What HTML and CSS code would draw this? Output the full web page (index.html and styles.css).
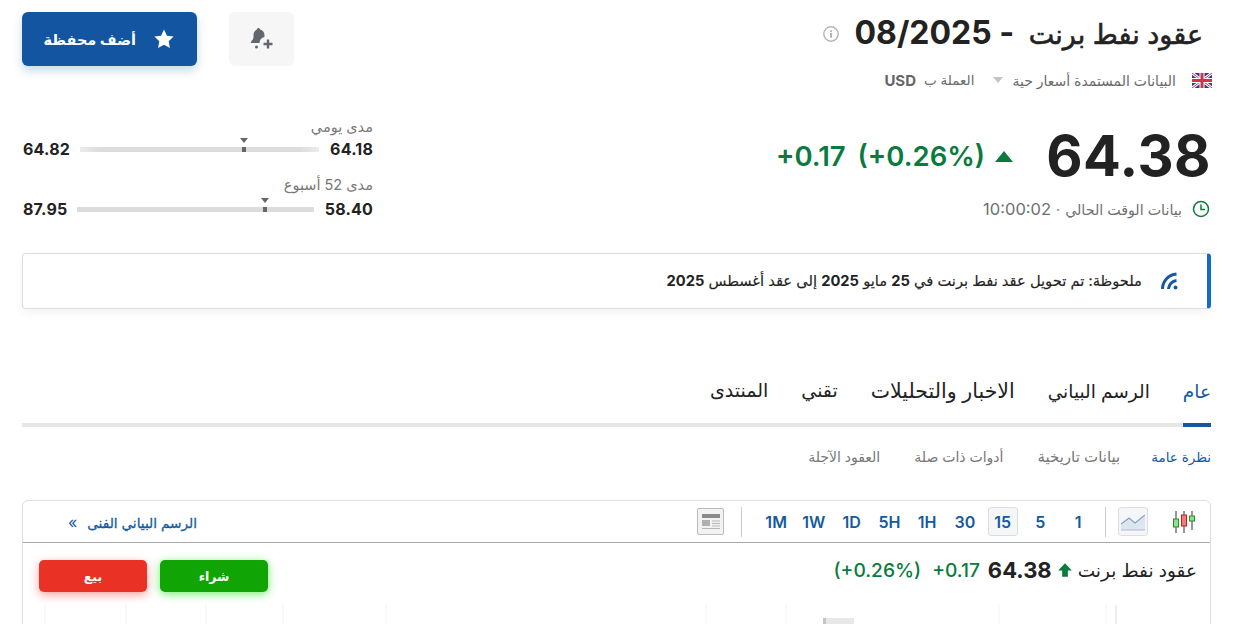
FILE: index.html
```html
<!DOCTYPE html>
<html lang="ar" dir="rtl">
<head>
    <meta charset="UTF-8">
    <meta name="viewport" content="width=device-width, initial-scale=1.0">
    <title>عقود نفط برنت - 08/2025</title>
    <link rel="stylesheet" href="styles.css">
</head>
<body>

<div class="page">
    <header class="top">
        <div class="instrument">
            <div class="title-row">
                <h1><span class="title-name">عقود نفط برنت</span> - 08/2025</h1>
                <svg class="info-icon" viewBox="0 0 16 16" width="16" height="16">
                    <circle cx="8" cy="8" r="7.2" fill="none" stroke="#b5b5b5" stroke-width="1.4"/>
                    <rect x="7.2" y="7" width="1.6" height="4.6" fill="#a0a0a0"/>
                    <rect x="7.2" y="4.2" width="1.6" height="1.6" fill="#a0a0a0"/>
                </svg>
            </div>
            <div class="meta-row">
                <svg class="flag" viewBox="0 0 20 15" width="20" height="15">
                    <rect width="20" height="15" fill="#2b3f8c"/>
                    <path d="M0 0L20 15M20 0L0 15" stroke="#fff" stroke-width="3"/>
                    <path d="M0 0L20 15M20 0L0 15" stroke="#d2334a" stroke-width="1"/>
                    <path d="M10 0V15M0 7.5H20" stroke="#fff" stroke-width="5"/>
                    <path d="M10 0V15M0 7.5H20" stroke="#d2334a" stroke-width="3"/>
                </svg>
                <span class="meta-text">البيانات المستمدة أسعار حية</span>
                <span class="caret"></span>
                <span class="meta-text meta-currency">العملة ب</span>
                <b class="currency">USD</b>
            </div>
        </div>
        <div class="actions">
            <button class="alert-btn" type="button">
                <svg viewBox="0 0 24 24" width="24" height="24">
                    <path d="M8.500 1c.9 0 1.500.6 1.600 1.500 2.600.7 4.400 2.900 4.400 5.600v2a6.500 6.500 0 0 0-5 6H1.500c-.8 0-1-.9-.5-1.400 1-1 2.500-2.300 2.500-4.600V8.100c0-2.700 1.600-4.900 3.400-5.600C7 1.600 7.600 1 8.500 1z" fill="#62666f"/>
                    <circle cx="6.500" cy="20" r="1.500" fill="#62666f"/>
                    <path d="M18 12.500v9M13.500 17h9" stroke="#62666f" stroke-width="2.400"/>
                </svg>
            </button>
            <button class="watch-btn" type="button">
                <svg viewBox="0 0 24 24" width="22" height="22">
                    <path d="M12 1.500l3.200 6.900 7.300.9-5.400 5.100 1.400 7.400L12 18.200l-6.500 3.600 1.400-7.400L1.500 9.300l7.300-.9z" fill="#fff"/>
                </svg>
                <span>أضف محفظة</span>
            </button>
        </div>
    </header>

    <section class="quote">
        <div class="price-col">
            <div class="price-row">
                <span class="price">64.38</span>
                <span class="arrow-up"></span>
                <span class="change">(+0.26%)</span>
                <span class="change">+0.17</span>
            </div>
            <div class="time-row">
                <svg viewBox="0 0 18 18" width="18" height="18">
                    <circle cx="9" cy="9" r="7.500" fill="none" stroke="#0a7a3e" stroke-width="1.500"/>
                    <path d="M9 4.500V9.500H13" fill="none" stroke="#0a7a3e" stroke-width="1.500"/>
                </svg>
                <span class="time-label">بيانات الوقت الحالي</span>
                <span>·</span>
                <span class="clock">10:00:02</span>
            </div>
        </div>
        <div class="ranges">
            <div class="range range-day">
                <div class="range-label">مدى يومي</div>
                <div class="range-line">
                    <b>64.18</b>
                    <div class="track track-fade">
                        <span class="marker marker-day"></span>
                    </div>
                    <b>64.82</b>
                </div>
            </div>
            <div class="range range-year">
                <div class="range-label">مدى 52 أسبوع</div>
                <div class="range-line">
                    <b>58.40</b>
                    <div class="track">
                        <span class="marker marker-year"></span>
                    </div>
                    <b>87.95</b>
                </div>
            </div>
        </div>
    </section>

    <div class="notice">
        <svg viewBox="0 0 18 18" width="18" height="18">
            <path d="M1.500 17A15 15 0 0 1 15.500 2" fill="none" stroke="#155a9e" stroke-width="3"/>
            <path d="M7.500 17A9 9 0 0 1 15.500 8.500" fill="none" stroke="#155a9e" stroke-width="3"/>
            <circle cx="14.500" cy="15.500" r="2" fill="#155a9e"/>
        </svg>
        <p>ملحوظة: تم تحويل عقد نفط برنت في <b>25</b> مايو <b>2025</b> إلى عقد أغسطس <b>2025</b></p>
    </div>

    <nav class="tabs">
        <a class="tab active" href="#">عام</a>
        <a class="tab tab-chart" href="#">الرسم البياني</a>
        <a class="tab tab-news" href="#">الاخبار والتحليلات</a>
        <a class="tab" href="#">تقني</a>
        <a class="tab" href="#">المنتدى</a>
    </nav>

    <nav class="subtabs">
        <a class="active" href="#">نظرة عامة</a>
        <a class="sub-history" href="#">بيانات تاريخية</a>
        <a href="#">أدوات ذات صلة</a>
        <a href="#">العقود الآجلة</a>
    </nav>

    <section class="chart-card">
        <div class="toolbar">
            <div class="tool-group">
                <svg class="candles" viewBox="0 0 24 24" width="24" height="24">
                    <path d="M4 1V23M12 1V23M20 1V20" stroke="#333" stroke-width="1"/>
                    <rect x="1.500" y="9" width="5" height="8" fill="#8fe08f" stroke="#2c8a2c"/>
                    <rect x="9.500" y="5" width="5" height="11" fill="#f47b7b" stroke="#b32626"/>
                    <rect x="17.500" y="6" width="5" height="5" fill="#8fe08f" stroke="#2c8a2c"/>
                </svg>
                <button class="tool-btn area-btn" type="button">
                    <svg viewBox="0 0 24 18" width="24" height="18">
                        <path d="M0 11L8 5L14 10L24 2V17H0z" fill="#dde5f0"/>
                        <path d="M0 11L8 5L14 10L24 2" fill="none" stroke="#86a0c2" stroke-width="1.200"/>
                        <path d="M0 17H24" stroke="#aebccd"/>
                    </svg>
                </button>
                <span class="tool-sep"></span>
                <div class="intervals">
                    <a href="#">1</a>
                    <a href="#">5</a>
                    <a class="current" href="#">15</a>
                    <a href="#">30</a>
                    <a href="#">1H</a>
                    <a href="#">5H</a>
                    <a href="#">1D</a>
                    <a href="#">1W</a>
                    <a href="#">1M</a>
                </div>
                <span class="tool-sep sep-news"></span>
                <button class="news-btn" type="button">
                    <svg viewBox="0 0 20 18" width="20" height="18">
                        <rect x="1" y="1" width="18" height="4" fill="#8a8a8a"/>
                        <rect x="1" y="7" width="8" height="6" fill="#b0b0b0"/>
                        <path d="M11 8H19M11 10.500H19M11 13H19M1 15.500H19" stroke="#b8b8b8"/>
                    </svg>
                </button>
            </div>
            <a class="tech-link" href="#">الرسم البياني الفنى <span class="chev">»</span></a>
        </div>
        <div class="chart-head">
            <div class="chart-quote">
                <span class="chart-name">عقود نفط برنت</span>
                <svg viewBox="0 0 14 14" width="16" height="16">
                    <path d="M7 1L13 7.500H9.500V13H4.500V7.500H1z" fill="#0a7a3e"/>
                </svg>
                <b class="chart-price">64.38</b>
                <span class="chart-change">+0.17</span>
                <span class="chart-change chart-pct">(+0.26%)</span>
            </div>
            <div class="trade-btns">
                <button class="buy-btn" type="button">شراء</button>
                <button class="sell-btn" type="button">بيع</button>
            </div>
        </div>
        <svg class="chart-grid" viewBox="0 0 1187 20" width="1187" height="20">
            <path d="M22 0V20M103 0V20M183 0V20M260 0V20M363 0V20M683 0V20M763 0V20M976 0V20M1083 0V20" stroke="#f2f2f2"/>
            <path d="M1093 0V20" stroke="#dcdcdc"/>
            <rect x="800" y="13" width="31" height="7" fill="#e8e8e8"/>
            <rect x="800" y="13" width="3" height="7" fill="#c4c4c4"/>
        </svg>
    </section>
</div>

</body>
</html>
```

FILE: styles.css
```css
* {
    box-sizing: border-box;
}
html, body {
    height: 100%;
}
body {
    margin: 0;
    background: #fff;
    color: #222;
    font-family: Inter, "DejaVu Sans", sans-serif;
    overflow: hidden;
}
a {
    color: inherit;
    text-decoration: none;
}
button {
    font-family: inherit;
    border: none;
    cursor: pointer;
}
.page {
    padding: 12px 28px 0 22px;
}

/* header */
.top {
    display: flex;
    justify-content: space-between;
    align-items: flex-start;
}
.instrument {
    padding-top: 2px;
}
.title-row {
    display: flex;
    align-items: center;
    gap: 16px;
    padding-right: 8px;
}
h1 {
    margin: 0;
    font-size: 32px;
    line-height: 38px;
    font-weight: 700;
}
.title-name {
    margin-left: 7px;
    font-size: 27px;
    font-weight: 400;
    -webkit-text-stroke: 0.6px #222;
}
.info-icon {
    flex: none;
}
.meta-row {
    display: flex;
    align-items: center;
    gap: 8px;
    height: 20px;
    margin-top: 16px;
    font-size: 14px;
    color: #6a6a6a;
}
.flag {
    margin-left: 8px;
    margin-right: -1px;
}
.caret {
    width: 0;
    height: 0;
    margin: 0 1px;
    border-left: 5px solid transparent;
    border-right: 5px solid transparent;
    border-top: 6px solid #c4c4c4;
}
.meta-currency {
    font-size: 13.500px;
    margin-right: 10px;
}
.currency {
    margin-right: 0;
    font-size: 15px;
    font-weight: 700;
    color: #666;
}
.actions {
    display: flex;
    gap: 32px;
}
.alert-btn {
    display: flex;
    align-items: center;
    justify-content: center;
    width: 65px;
    height: 54px;
    padding: 0;
    background: #f6f6f6;
    border-radius: 6px;
}
.watch-btn {
    display: flex;
    align-items: center;
    gap: 17px;
    width: 175px;
    height: 54px;
    padding: 0 22px 0 0;
    background: #1355a0;
    color: #fff;
    font-size: 14.500px;
    font-weight: 700;
    white-space: nowrap;
    border-radius: 6px;
    box-shadow: 0 5px 10px rgba(19, 85, 160, 0.22);
}

/* quote */
.quote {
    display: flex;
    justify-content: space-between;
    align-items: flex-start;
    margin-top: 18px;
}
.price-col {
    padding-top: 6px;
}
.price-row {
    display: flex;
    align-items: center;
    height: 84px;
}
.price {
    font-size: 56px;
    font-weight: 700;
    letter-spacing: 0.5px;
    margin-left: 33px;
}
.arrow-up {
    width: 0;
    height: 0;
    margin-left: 10px;
    border-left: 9px solid transparent;
    border-right: 9px solid transparent;
    border-bottom: 11px solid #0a7a3e;
}
.change {
    font-size: 27.500px;
    font-weight: 600;
    color: #0a7a3e;
    margin-left: 12px;
    direction: ltr;
}
.time-row {
    display: flex;
    align-items: center;
    gap: 5px;
    margin-top: 1px;
    padding-right: 1px;
    font-size: 14.250px;
    color: #6f6f6f;
}
.time-label {
    margin-right: 5px;
}
.clock {
    font-size: 16.500px;
}
.ranges {
    width: 350px;
    margin-left: 1px;
    padding-top: 8px;
}
.range-label {
    font-size: 14.500px;
    line-height: 22px;
    color: #777;
}
.range-line {
    display: flex;
    align-items: center;
    justify-content: space-between;
    height: 22px;
    font-size: 16px;
}
.range-line b {
    font-weight: 700;
    letter-spacing: 0.2px;
}
.range-year {
    margin-top: 14px;
}
.range-year .range-label {
    margin-bottom: 2px;
}
.track {
    position: relative;
    flex: 1;
    height: 5px;
    margin: 0 11px 0 10px;
    background: #dcdcdc;
}
.track-fade {
    background: linear-gradient(to right, #ececec, #dcdcdc 8%, #dcdcdc 92%, #ececec);
}
.marker {
    position: absolute;
    top: -9px;
    width: 4px;
    height: 14px;
    background: linear-gradient(to bottom, transparent 9px, #666 9px);
}
.marker::before {
    content: "";
    position: absolute;
    top: 0;
    right: -2px;
    border-left: 4px solid transparent;
    border-right: 4px solid transparent;
    border-top: 5px solid #666;
}
.marker-day {
    right: 73px;
}
.marker-year {
    right: 47px;
}

/* notice */
.notice {
    display: flex;
    align-items: center;
    gap: 19px;
    height: 56px;
    margin-top: 33px;
    padding: 0 28px 0 20px;
    background: #fff;
    border: 1px solid #ddd;
    border-right: 4px solid #0f6bd0;
    border-radius: 4px;
    box-shadow: 0 4px 10px rgba(0, 0, 0, 0.05);
}
.notice p {
    margin: 0;
    font-size: 14.700px;
    font-weight: 400;
    -webkit-text-stroke: 0.15px #222;
}
.notice b {
    font-weight: 700;
    -webkit-text-stroke: 0;
}

/* tabs */
.tabs {
    display: flex;
    gap: 33px;
    height: 70px;
    margin-top: 48px;
    border-bottom: 4px solid #e6e6e6;
}
.tab {
    height: 70px;
    padding-top: 22px;
    font-size: 19px;
    line-height: 24px;
    border-bottom: 4px solid transparent;
}
.tab-chart {
    font-size: 18.500px;
}
.tab-news {
    font-size: 20.500px;
}
.tab.active {
    font-size: 18.500px;
    color: #155a9e;
    border-bottom-color: #155a9e;
}
.subtabs {
    display: flex;
    gap: 34px;
    margin-top: 20px;
    font-size: 14px;
    line-height: 20px;
    color: #777;
}
.subtabs .active {
    margin-left: -3px;
    font-size: 13.500px;
    color: #155a9e;
}
.sub-history {
    font-size: 15px;
}

/* chart card */
.chart-card {
    margin-top: 33px;
    border: 1px solid #ddd;
    border-radius: 6px 6px 0 0;
}
.toolbar {
    display: flex;
    justify-content: space-between;
    align-items: center;
    height: 42px;
    padding: 0 14px 0 12px;
    border-bottom: 1px solid #aaa;
}
.tool-group {
    display: flex;
    align-items: center;
}
.tool-btn {
    display: flex;
    align-items: center;
    justify-content: center;
    width: 30px;
    height: 29px;
    margin-right: 24px;
    padding: 0;
    background: #f4f6f9;
    border: 1px solid #ddd;
    border-radius: 3px;
}
.tool-sep {
    width: 1px;
    height: 30px;
    margin: 0 12px 0 0;
    background: #ccc;
}
.intervals {
    display: flex;
    margin-right: 8px;
}
.intervals a {
    display: flex;
    align-items: center;
    justify-content: center;
    width: 37.750px;
    height: 29px;
    font-size: 16px;
    font-weight: 600;
    color: #155a9e;
}
.intervals .current {
    width: 29.750px;
    margin: 0 4px;
    background: #f5f6f8;
    border: 1px solid #ddd;
    border-radius: 3px;
}
.sep-news {
    margin-right: 15px;
}
.news-btn {
    display: flex;
    align-items: center;
    justify-content: center;
    width: 27px;
    height: 27px;
    margin-right: 17px;
    padding: 0;
    background: #f2f2f2;
    border: 1px solid #bbb;
    border-radius: 2px;
}
.tech-link {
    padding-left: 33px;
    font-size: 13.700px;
    font-weight: 400;
    color: #155a9e;
    -webkit-text-stroke: 0.3px #155a9e;
}
.chev {
    margin-right: 6px;
    font-size: 16px;
    -webkit-text-stroke: 0;
}
.chart-head {
    display: flex;
    justify-content: space-between;
    align-items: flex-start;
    height: 62px;
    padding: 17px 13px 0 16px;
}
.chart-quote {
    display: flex;
    align-items: center;
    gap: 5px;
    height: 20px;
    font-size: 18.500px;
}
.chart-price {
    font-size: 22px;
    font-weight: 700;
}
.chart-change {
    margin-right: 3px;
    font-size: 19.200px;
    font-weight: 500;
    color: #0a7a3e;
    direction: ltr;
}
.chart-pct {
    margin-right: 6px;
}
.trade-btns {
    display: flex;
    gap: 13px;
}
.trade-btns button {
    width: 108px;
    height: 32px;
    color: #fff;
    font-size: 12.500px;
    font-weight: 700;
    border-radius: 5px;
}
.buy-btn {
    background: #10a505;
    box-shadow: 0 2px 10px rgba(40, 230, 30, 0.65);
}
.sell-btn {
    background: #ea3125;
    box-shadow: 0 3px 10px rgba(234, 49, 37, 0.45);
}
.chart-grid {
    display: block;
}
```
